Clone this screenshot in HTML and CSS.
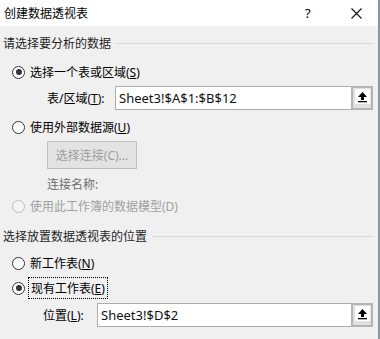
FILE: index.html
```html
<!DOCTYPE html>
<html lang="zh-CN">
<head>
  <meta charset="UTF-8">
  <title>创建数据透视表</title>
  <link rel="stylesheet" href="styles.css">
</head>
<body>
  <div class="dialog">
    <div class="titlebar">
      <span class="title">创建数据透视表</span>
      <span class="help">?</span>
      <span class="close">
        <svg width="11" height="11" viewBox="0 0 11 11"><path d="M0.5 0.5 L10.5 10.5 M10.5 0.5 L0.5 10.5" stroke="#111" stroke-width="1.1" fill="none"/></svg>
      </span>
    </div>

    <div class="content">
      <div class="section">请选择要分析的数据</div>

      <div class="radio-row r1">
        <span class="radio checked"></span>
        <span>选择一个表或区域(<u>S</u>)</span>
      </div>

      <div class="field f1">
        <span class="field-label">表/区域(<u>T</u>):</span>
        <span class="input">Sheet3!$A$1:$B$12</span>
        <span class="pick">
          <span class="pick-inner">
            <svg width="11" height="12" viewBox="0 0 11 12"><path d="M5.5 1 L10 6 L7 6 L7 9 L4 9 L4 6 L1 6 Z" fill="#000"/><rect x="1" y="10" width="9" height="1.3" fill="#000"/></svg>
          </span>
        </span>
      </div>

      <div class="radio-row r2">
        <span class="radio"></span>
        <span>使用外部数据源(<u>U</u>)</span>
      </div>

      <div class="btn-row">
        <span class="btn disabled">选择连接(C)...</span>
      </div>

      <div class="conn-name">连接名称:</div>

      <div class="radio-row r3 disabled">
        <span class="radio"></span>
        <span>使用此工作簿的数据模型(D)</span>
      </div>

      <div class="section s2">选择放置数据透视表的位置</div>

      <div class="radio-row r4">
        <span class="radio"></span>
        <span>新工作表(<u>N</u>)</span>
      </div>

      <div class="radio-row r5">
        <span class="radio checked"></span>
        <span class="focus">现有工作表(<u>E</u>)</span>
      </div>

      <div class="field f2">
        <span class="field-label">位置(<u>L</u>):</span>
        <span class="input">Sheet3!$D$2</span>
        <span class="pick">
          <span class="pick-inner">
            <svg width="11" height="12" viewBox="0 0 11 12"><path d="M5.5 1 L10 6 L7 6 L7 9 L4 9 L4 6 L1 6 Z" fill="#000"/><rect x="1" y="10" width="9" height="1.3" fill="#000"/></svg>
          </span>
        </span>
      </div>
    </div>
  </div>
</body>
</html>
```

FILE: styles.css
```css
/* Dialog shell */
body {
  margin: 0;
  font-family: "Noto Sans", "Noto Sans CJK SC", sans-serif;
  font-size: 12px;
  color: #000;
  background: #f0f0f0;
}
.dialog {
  width: 378px;
  height: 339px;
  border-right: 2px solid #8896a6;
  background: #f0f0f0;
  overflow: hidden;
}
.titlebar {
  height: 26px;
  background: #fff;
  display: flex;
  align-items: center;
  padding-left: 4px;
}
.title {
  flex: 1;
  font-size: 12px;
  color: #000;
}
.help {
  width: 10px;
  margin-right: 36px;
  font-size: 13px;
}
.close {
  display: flex;
  margin-right: 16px;
}

/* Content */
.content {
  padding: 8px 5px 0 3px;
}
.section {
  height: 18px;
  display: flex;
  align-items: center;
  color: #1e1e1e;
}
.section::after {
  content: "";
  flex: 1;
  height: 1px;
  margin-left: 5px;
  background: #d9d9d9;
}
.s2 {
  margin-top: 11px;
}
.radio-row {
  height: 20px;
  display: flex;
  align-items: center;
  padding-left: 9px;
}
.radio {
  width: 11px;
  height: 11px;
  border: 1px solid #333;
  border-radius: 50%;
  background: #fff;
  margin-right: 5px;
  position: relative;
  flex-shrink: 0;
}
.radio.checked::after {
  content: "";
  position: absolute;
  left: 2.5px;
  top: 2.5px;
  width: 6px;
  height: 6px;
  border-radius: 50%;
  background: #333;
}
.r1 { margin-top: 10px; }
.r2 { margin-top: 7px; }
.r3 { margin-top: 2px; }
.r4 { margin-top: 8px; }
.r5 { margin-top: 5px; }
.disabled { color: #a0a0a0; }
.radio-row.disabled .radio {
  border-color: #bcbcbc;
  background: #f4f4f4;
}
.focus {
  outline: 1px dotted #000;
  outline-offset: 1px;
  padding: 0 1px;
}

/* Fields */
.field {
  height: 24px;
  display: flex;
  align-items: stretch;
}
.f1 {
  margin-top: 4px;
  padding-left: 44px;
}
.f1 .field-label { width: 59px; }
.f2 {
  margin-top: 5px;
  padding-left: 40px;
}
.f2 .field-label { width: 45px; }
.field-label {
  display: flex;
  align-items: center;
  margin-right: 9px;
}
.input {
  flex: 1;
  display: flex;
  align-items: center;
  padding-left: 3px;
  background: #fff;
  border: 1px solid #adadad;
  border-right: none;
  font-size: 13px;
  color: #111;
}
.pick {
  width: 18px;
  border: 2px solid #b4b4b4;
  background: #e1e1e1;
  display: flex;
  align-items: flex-start;
  justify-content: center;
  padding-top: 1px;
}
.pick-inner {
  width: 15px;
  height: 15px;
  background: #fff;
  display: flex;
  align-items: center;
  justify-content: center;
}

/* Disabled button */
.btn-row {
  margin-top: 4px;
  padding-left: 44px;
}
.btn {
  display: inline-flex;
  align-items: center;
  justify-content: center;
  width: 88px;
  height: 26px;
  border: 1px solid #bfbfbf;
  background: #e3e3e3;
}
.btn.disabled { color: #9d9d9d; }
.conn-name {
  height: 20px;
  margin-top: 5px;
  padding-left: 44px;
  display: flex;
  align-items: center;
  color: #6d6d6d;
}
```
